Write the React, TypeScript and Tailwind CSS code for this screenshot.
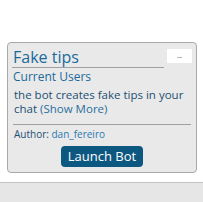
export default function App() {
  return (
    <div className="w-[203px] h-[202px] bg-white flex flex-col" style={{ fontFamily: '"Open Sans", sans-serif' }}>
      <div className="pt-[42px] px-[7px]">
        <div className="w-[190px] h-[131px] bg-[#e9e9e9] border border-[#a8a8a8] rounded-[4px] px-[4px] pt-[4px] flex flex-col">
          <div className="flex items-start gap-[3px]">
            <div className="flex-1 border-b border-[#a0a0a0] text-[16px] leading-[20px] text-[#19699a] pl-[1px]">Fake tips</div>
            <div className="w-[25px] h-[14px] bg-white mt-[2px] text-[8px] leading-[14px] text-center text-[#555]">--</div>
          </div>
          <div className="text-[12px] leading-[16px] text-[#19699a] pl-[1px] pt-[1px]">Current Users</div>
          <p className="text-[11.5px] leading-[14px] text-[#1d4f73] pl-[2px] pt-[3px] whitespace-nowrap">
            the bot creates fake tips in your
            <br />
            chat <span className="text-[#2a6f9e]">(Show More)</span>
          </p>
          <div className="border-t border-[#a0a0a0] mt-[8px] mx-[1px]" />
          <div className="text-[10px] leading-[16px] text-[#1d4f73] pl-[2px] pt-[1px]">
            Author: <span className="text-[#2a7ab0]">dan_fereiro</span>
          </div>
          <div className="flex justify-center pt-[4px]">
            <button className="bg-[#0d5880] text-white text-[13px] leading-[21px] px-[7px] rounded-[4px]">Launch Bot</button>
          </div>
        </div>
      </div>
      <div className="mt-[9px] border-t border-[#c4c4c4] bg-[#e6e6e6] flex-1" />
    </div>
  );
}
